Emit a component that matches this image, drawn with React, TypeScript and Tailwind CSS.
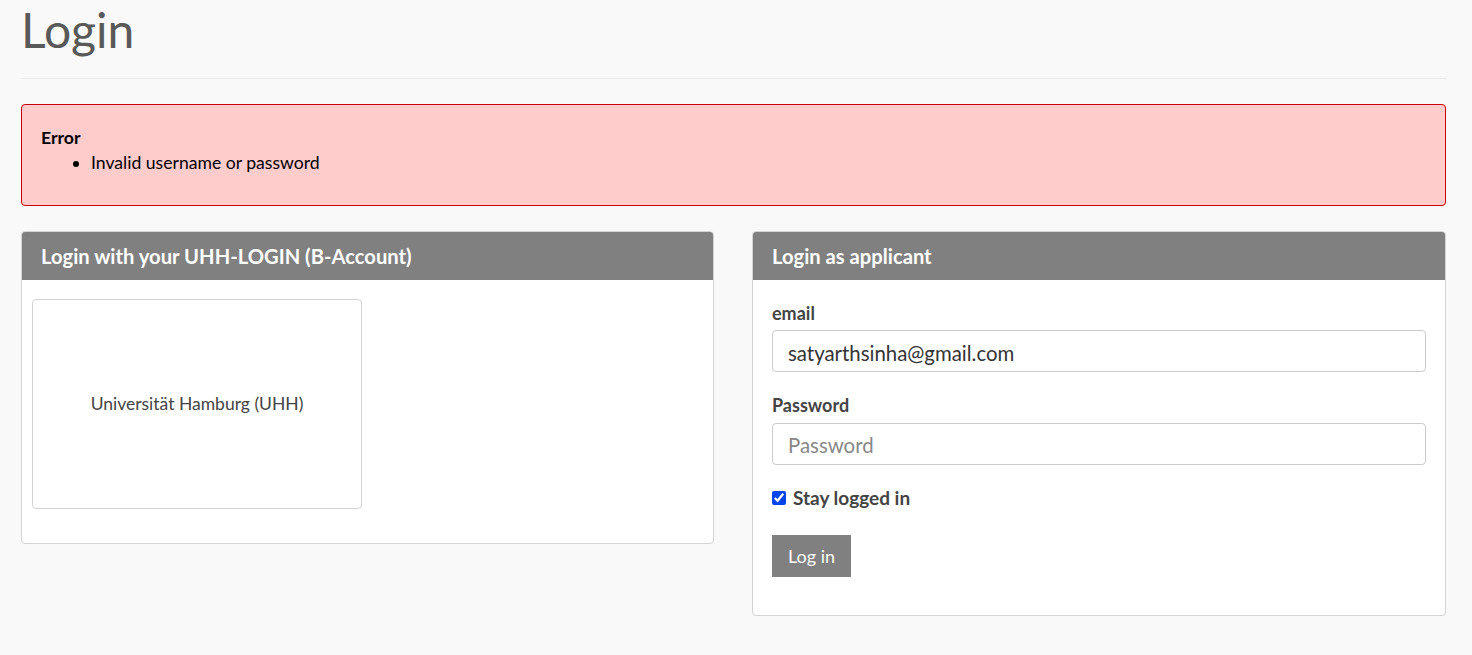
import React from "react";

const font = { fontFamily: "Lato, 'Noto Sans', sans-serif" };

function PanelHeading({ title }: { title: string }) {
  return (
    <div className="flex h-[48px] items-center rounded-t-[3px] bg-[#808080] px-[19px] text-[20.2px] font-bold text-white">
      {title}
    </div>
  );
}

export default function App() {
  return (
    <div
      className="min-h-[655px] bg-[#f9f9f9] pl-[21px] pr-[26px] text-[#454545]"
      style={font}
    >
      <div className="border-b border-[#eaeaea] pb-[23px] pt-[5px]">
        <h1 className="text-[48px] leading-[50px] text-[#595959]">Login</h1>
      </div>

      <div className="mt-[25px] h-[102px] rounded-[4px] border border-[#cc0000] bg-[#ffcccc] px-[19px] pt-[20px] text-[17.6px] leading-[25px] text-black">
        <div className="font-bold">Error</div>
        <ul className="list-disc pl-[50px]">
          <li>Invalid username or password</li>
        </ul>
      </div>

      <div className="mt-[25px] grid grid-cols-[693px_1fr] gap-[38px]">
        <div className="self-start rounded-[4px] border border-[#d4d4d4] bg-white">
          <PanelHeading title="Login with your UHH-LOGIN (B-Account)" />
          <div className="px-[10px] pb-[34px] pt-[19px]">
            <div className="flex h-[210px] w-[330px] items-center justify-center rounded-[4px] border border-[#d4d4d4] text-[17.5px] text-[#444]">
              Universität Hamburg (UHH)
            </div>
          </div>
        </div>

        <div className="rounded-[4px] border border-[#d4d4d4] bg-white">
          <PanelHeading title="Login as applicant" />
          <div className="px-[19px] pb-[38px] pt-[21px]">
            <label className="block text-[18px] font-bold leading-[24px] text-[#444]">
              email
            </label>
            <input
              type="text"
              defaultValue="satyarthsinha@gmail.com"
              className="mt-[5px] block h-[42px] w-full rounded-[4px] border border-[#cccccc] px-[15px] pt-[3px] text-[20.4px] text-[#333] outline-none"
            />
            <label className="mt-[21px] block text-[18px] font-bold leading-[24px] text-[#444]">
              Password
            </label>
            <input
              type="password"
              placeholder="Password"
              className="mt-[6px] block h-[42px] w-full rounded-[4px] border border-[#cccccc] px-[15px] pt-[2px] text-[20.4px] text-[#333] outline-none placeholder:text-[#888]"
            />
            <label className="mt-[21px] flex h-[24px] items-center gap-[7px] text-[19px] font-bold text-[#444]">
              <input
                type="checkbox"
                defaultChecked
                className="h-[14px] w-[14px] accent-[#0044ee]"
              />
              Stay logged in
            </label>
            <button
              type="button"
              className="mt-[25px] h-[42px] w-[79px] bg-[#808080] text-[18px] text-white"
            >
              Log in
            </button>
          </div>
        </div>
      </div>
    </div>
  );
}
